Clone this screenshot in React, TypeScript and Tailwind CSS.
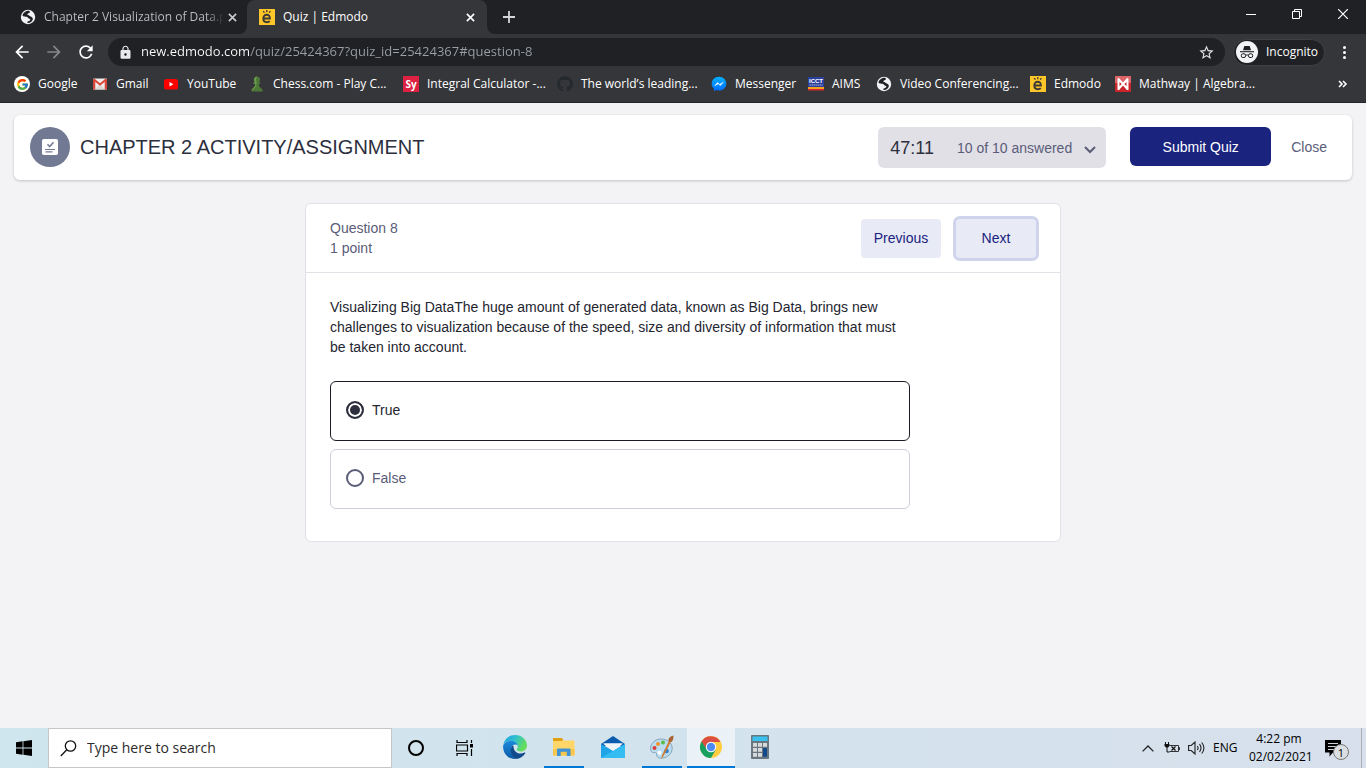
import React, { useState } from "react";
import { FcGoogle } from "react-icons/fc";
import { FaGithub } from "react-icons/fa";
import { MdArrowBack, MdArrowForward, MdRefresh, MdLock, MdStarBorder } from "react-icons/md";

const GlobeIcon = () => (
  <svg viewBox="0 0 16 16" className="size-4 shrink-0" aria-hidden="true">
    <circle cx="8" cy="8" r="7.2" fill="#f1f3f4" />
    <path d="M7.2 1.8C5 2.6 3 4 2.4 6.6c1.2 1.6 3 .9 4.300 1.200 1.500.4 1 1.800 2.600 1.900 1.300.1 1.200 1 .5 1.700-.9.9-2.300.7-2.800 2.200l1.100.4c2.200-.2 4-1.300 4.600-3.300.5-1.700-.5-3-2-3.300C9 7.100 9.600 6.200 8.300 6 7.300 5.900 7 5.400 7.700 4.700 8.600 3.900 9.900 4.200 10 2.700L9 1.800z" fill="#202124" />
    <path d="M2.600 8.600c.9 1.700 2.300 2.200 3.700 2.700.5.900-.2 1.800-.5 2.600C3.700 13 2.300 11.200 2 9z" fill="#f1f3f4" />
  </svg>
);

const EdmodoIcon = () => (
  <svg viewBox="0 0 16 16" className="size-4 shrink-0" aria-hidden="true">
    <rect width="16" height="16" fill="#ffc629" />
    <path d="M4.600 9.500h6.300c.1-2.200-1-3.800-3.200-3.800-2.100 0-3.400 1.600-3.400 3.900s1.400 3.700 3.600 3.700c1.300 0 2.200-.4 2.900-1.100" fill="none" stroke="#3c3a36" strokeWidth="1.900" />
    <path d="M4.300 2l1 1.800M7.800 1v2.300M11.300 2l-1 1.800" stroke="#3c3a36" strokeWidth="1.300" />
  </svg>
);

const GmailIcon = () => (
  <svg viewBox="0 0 16 16" className="size-4 shrink-0" aria-hidden="true">
    <rect x="1" y="2.500" width="14" height="11" rx="1" fill="#f1efee" />
    <path d="M1 3.500h2.300V13.500H2a1 1 0 0 1-1-1zM12.700 3.500H15v9a1 1 0 0 1-1 1h-1.300z" fill="#d5493d" />
    <path d="M3 13.500l4-4.500h2l4 4.500z" fill="#dcd9d7" />
    <path d="M1.600 3.200L8 8.600l6.400-5.400" fill="none" stroke="#db4437" strokeWidth="1.900" />
  </svg>
);

const YouTubeIcon = () => (
  <svg viewBox="0 0 16 16" className="size-4 shrink-0" aria-hidden="true">
    <rect x="1" y="3" width="14" height="10.500" rx="2.600" fill="#f00" />
    <path d="M6.500 6v4.500L10.300 8.250z" fill="#fff" />
  </svg>
);

const PawnIcon = () => (
  <svg viewBox="0 0 16 16" className="size-4 shrink-0" aria-hidden="true">
    <path d="M8 .5a3.100 3.100 0 0 1 2 5.400l1.400.9v1H9.700c.1 2.400.9 3.600 2.700 4.700.9.600 1.200 1.400 1.200 3H2.400c0-1.600.3-2.400 1.200-3 1.800-1.100 2.600-2.300 2.700-4.700H4.600v-1L6 5.900A3.100 3.100 0 0 1 8 .5z" fill="#4e7837" />
    <path d="M8 .5a3.100 3.100 0 0 0-2 5.400l-1.400.9v1h1.700c-.1 2.400-.9 3.600-2.700 4.700-.6.400-.9.900-1.100 1.600 3-.6 4.600-3 5-6.300C7.700 5 6.300 3.300 8 .5z" fill="#6a9a4b" />
  </svg>
);

const SyIcon = () => (
  <span className="flex size-4 shrink-0 items-center justify-center bg-[#dd2142] font-['Open_Sans',sans-serif] text-[10px] leading-none font-bold text-white">Sy</span>
);

const MessengerIcon = () => (
  <svg viewBox="0 0 16 16" className="size-4 shrink-0" aria-hidden="true">
    <defs>
      <linearGradient id="msg" x1="0" y1="0" x2="0" y2="1">
        <stop offset="0" stopColor="#00b2ff" />
        <stop offset="1" stopColor="#006aff" />
      </linearGradient>
    </defs>
    <path d="M8 .8C3.900.8.700 3.800.7 7.700c0 2.100.9 3.900 2.300 5.100v2.400l2.200-1.100c.9.300 1.800.4 2.800.4 4.100 0 7.300-2.900 7.300-6.800S12.100.8 8 .8z" fill="url(#msg)" />
    <path d="M3.700 9.800l2.800-3.200 2.200 1.800 3.500-2.100-2.800 3.300-2.200-1.800z" fill="#fff" stroke="#fff" strokeWidth=".5" />
  </svg>
);

const AimsIcon = () => (
  <svg viewBox="0 0 16 16" className="size-4 shrink-0" aria-hidden="true">
    <rect y="1" width="16" height="10.500" fill="#2b3f9d" />
    <text x="8" y="7" textAnchor="middle" fontFamily="Liberation Sans, sans-serif" fontWeight="bold" fontSize="6" fill="#fff">ICCT</text>
    <path d="M1.500 9h13" stroke="#aab4e0" strokeWidth="1.200" strokeDasharray="1.500 .5" />
    <path d="M0 11h16v2H0z" fill="#f2a21c" />
    <path d="M0 13h16v1.500H0z" fill="#d8242c" />
  </svg>
);

const MathwayIcon = () => (
  <svg viewBox="0 0 16 16" className="size-4 shrink-0" aria-hidden="true">
    <rect width="16" height="16" rx="1" fill="#c9252b" />
    <path d="M0 0h16v7H0z" fill="#dc6468" />
    <path d="M3.500 14V2.500M12.500 14V2.500M3 2.500L12.500 13M13 2.500L3.500 13" fill="none" stroke="#fff" strokeWidth="2" />
  </svg>
);

const IncognitoIcon = () => (
  <svg viewBox="0 0 22 22" className="size-[22px] shrink-0" aria-hidden="true">
    <circle cx="11" cy="11" r="11" fill="#f1f3f4" />
    <path d="M8.300 5h5.400l1.300 4.300H7z" fill="#202124" />
    <path d="M4 10.700h14" stroke="#202124" strokeWidth="1.100" />
    <rect x="5.300" y="12.800" width="4.200" height="3.700" rx="1.500" fill="none" stroke="#202124" />
    <rect x="12.500" y="12.800" width="4.200" height="3.700" rx="1.500" fill="none" stroke="#202124" />
    <path d="M9.500 14h3" stroke="#202124" />
  </svg>
);

const Cross = ({ className }: { className: string }) => (
  <svg viewBox="0 0 10 10" className={className} aria-hidden="true">
    <path d="M1 1l8 8M9 1l-8 8" stroke="currentColor" strokeWidth="1.800" />
  </svg>
);

const bookmarks = [
  { label: "Google", width: "w-[78px]", icon: <span className="flex size-4 shrink-0 items-center justify-center rounded-full bg-white"><FcGoogle size={13} /></span> },
  { label: "Gmail", width: "w-[71px]", icon: <GmailIcon /> },
  { label: "YouTube", width: "w-[86px]", icon: <YouTubeIcon /> },
  { label: "Chess.com - Play C...", width: "w-[154px]", icon: <PawnIcon /> },
  { label: "Integral Calculator -...", width: "w-[154px]", icon: <SyIcon /> },
  { label: "The world’s leading...", width: "w-[154px]", icon: <FaGithub className="size-4 shrink-0 text-[#24292e]" /> },
  { label: "Messenger", width: "w-[97px]", icon: <MessengerIcon /> },
  { label: "AIMS", width: "w-[68px]", icon: <AimsIcon /> },
  { label: "Video Conferencing...", width: "w-[154px]", icon: <GlobeIcon /> },
  { label: "Edmodo", width: "w-[85px]", icon: <EdmodoIcon /> },
  { label: "Mathway | Algebra...", width: "w-[154px]", icon: <MathwayIcon /> },
];

function Browser() {
  return (
    <header className="border-b border-[#232427] bg-[#35363a] font-['Open_Sans','Noto_Sans',sans-serif] text-xs text-white">
      <div className="flex h-[34px] bg-[#202124]">
        <div className="flex w-[247px] items-center bg-[#35363a]">
          <div className="flex h-full w-full items-center rounded-br-lg bg-[#202124] pr-2.5 pl-5">
            <GlobeIcon />
            <button className="ml-2 flex-1 overflow-hidden bg-gradient-to-r from-[#bdc1c6] from-90% to-transparent bg-clip-text text-left whitespace-nowrap text-transparent">Chapter 2 Visualization of Data.pdf</button>
            <button aria-label="Close tab" className="ml-1 text-[#c8cbcf]"><Cross className="size-[9px]" /></button>
          </div>
        </div>
        <div className="flex w-60 items-center rounded-t-lg bg-[#35363a] pr-3 pl-3">
          <EdmodoIcon />
          <button className="ml-2 flex-1 text-left">Quiz | Edmodo</button>
          <button aria-label="Close tab"><Cross className="size-[9px]" /></button>
        </div>
        <div className="flex flex-1 bg-[#35363a]">
          <div className="flex flex-1 items-center rounded-bl-lg bg-[#202124] pl-4">
            <button aria-label="New tab">
              <svg viewBox="0 0 12 12" className="size-3" aria-hidden="true"><path d="M6 0v12M0 6h12" stroke="#d3d5d8" strokeWidth="1.800" /></svg>
            </button>
            <div className="mb-1.5 ml-auto flex h-7 items-center">
              <button aria-label="Minimize" className="flex w-[46px] justify-center">
                <svg viewBox="0 0 10 10" className="size-2.5" aria-hidden="true"><path d="M0 5.500h10" stroke="#fff" /></svg>
              </button>
              <button aria-label="Restore" className="flex w-[46px] justify-center">
                <svg viewBox="0 0 10 10" className="size-2.5" aria-hidden="true"><path d="M.5 2.500h7v7h-7zM2.500 2.500v-2h7v7h-2" fill="none" stroke="#fff" /></svg>
              </button>
              <button aria-label="Close window" className="flex w-[46px] justify-center">
                <svg viewBox="0 0 10 10" className="size-2.5" aria-hidden="true"><path d="M0 0l10 10M10 0L0 10" stroke="#fff" strokeWidth="1.200" /></svg>
              </button>
            </div>
          </div>
        </div>
      </div>
      <div className="flex h-9 items-center pr-[15px] pl-3">
        <button aria-label="Back"><MdArrowBack size={20} /></button>
        <button aria-label="Forward" className="ml-3 text-[#85878b]"><MdArrowForward size={20} /></button>
        <button aria-label="Reload" className="ml-3"><MdRefresh size={20} /></button>
        <div className="ml-3 flex h-7 flex-1 items-center rounded-full bg-[#202124] pr-2.5 pl-2.5">
          <MdLock size={15} className="shrink-0 text-[#e8eaed]" />
          <input
            aria-label="Address"
            defaultValue="new.edmodo.com/quiz/25424367?quiz_id=25424367#question-8"
            className="ml-2 flex-1 bg-[linear-gradient(to_right,#ffffff_108px,#9aa0a6_108px)] bg-clip-text text-[13px] text-transparent outline-none"
          />
          <button aria-label="Bookmark this tab" className="text-[#dfe1e5]"><MdStarBorder size={17} /></button>
        </div>
        <button className="ml-2 flex h-[27px] w-[92px] items-center gap-2 rounded-full border border-[#3f4044] bg-[#202124] pl-0.5">
          <IncognitoIcon />
          Incognito
        </button>
        <button aria-label="Menu" className="ml-3 flex w-3.5 flex-col items-center gap-[2px]">
          <span className="size-[3px] rounded-full bg-white" />
          <span className="size-[3px] rounded-full bg-white" />
          <span className="size-[3px] rounded-full bg-white" />
        </button>
      </div>
      <nav aria-label="Bookmarks" className="flex h-8 items-center pb-1 pl-3.5">
        {bookmarks.map((b) => (
          <a key={b.label} href="#" className={`flex shrink-0 items-center gap-2 whitespace-nowrap ${b.width}`}>
            {b.icon}
            {b.label}
          </a>
        ))}
        <button aria-label="More bookmarks" className="mr-[18px] ml-auto">
          <svg viewBox="0 0 10 8" className="h-2 w-2.5" aria-hidden="true"><path d="M1 1l3 3-3 3M5 1l3 3-3 3" fill="none" stroke="#fff" strokeWidth="1.600" /></svg>
        </button>
      </nav>
    </header>
  );
}

function Quiz() {
  const [answer, setAnswer] = useState("True");
  return (
    <main className="flex-1 bg-[#f3f3f5] px-3.5 pt-3 font-['Liberation_Sans',Arial,sans-serif] text-sm text-[#5a5c78]">
      <div className="flex items-start rounded-md bg-white pt-3 pr-[25px] pb-3 pl-4 shadow-[0_1px_3px_rgba(0,0,0,0.2)]">
        <span className="flex size-10 items-center justify-center rounded-full bg-[#727993]">
          <svg viewBox="0 0 16 16" className="size-4" aria-hidden="true">
            <rect width="16" height="16" rx="1.800" fill="#fff" />
            <path d="M5.500 5.300l2.200 2.300L11.500 3.200" fill="none" stroke="#727993" strokeWidth="1.500" />
            <path d="M3 10.500h10M3.500 12.900h7" stroke="#727993" strokeWidth="1.100" />
          </svg>
        </span>
        <h1 className="ml-2.5 text-xl leading-10 text-[#2d2f3e]">CHAPTER 2 ACTIVITY/ASSIGNMENT</h1>
        <button className="ml-auto flex h-[41px] w-[228px] items-center rounded-md bg-[#e1e0e7] pr-2.5 pl-3">
          <span className="text-lg text-[#2d2f3e]">47:11</span>
          <span className="ml-auto">10 of 10 answered</span>
          <svg viewBox="0 0 12 8" className="mt-1 ml-3 h-2 w-3" aria-hidden="true"><path d="M1 1l5 5 5-5" fill="none" stroke="#5a5c78" strokeWidth="2" /></svg>
        </button>
        <button className="ml-6 h-[39px] w-[141px] rounded-md bg-[#1a237e] text-white">Submit Quiz</button>
        <button className="ml-5 h-[39px]">Close</button>
      </div>

      <section className="mx-auto mt-[23px] max-w-[756px] rounded-md border border-[#e1e1e7] bg-white">
        <div className="flex h-[69px] items-center border-b border-[#e1e1e7] pr-6 pl-6">
          <div className="leading-5">
            <h2>Question 8</h2>
            <p>1 point</p>
          </div>
          <button className="ml-auto h-[39px] w-20 rounded-sm bg-[#e8eaf6] text-[#1a237e]">Previous</button>
          <button className="ml-[15px] h-[39px] w-20 rounded-sm bg-[#e8eaf6] text-[#1a237e] shadow-[0_0_0_3px_#d0d3ec]">Next</button>
        </div>
        <div className="px-6 pt-6 pb-8">
          <p className="max-w-[580px] leading-5 text-[#24252f]">
            Visualizing Big DataThe huge amount of generated data, known as Big Data, brings new challenges to visualization because of the speed, size and diversity of information that must be taken into account.
          </p>
          <div className="mt-6 flex max-w-[580px] flex-col gap-2">
            {["True", "False"].map((option) => (
              <label
                key={option}
                className={
                  answer === option
                    ? "flex h-[60px] items-center gap-2 rounded-md border border-[#1b1b28] pb-0.5 pl-[15px] text-[#24252f]"
                    : "flex h-[60px] items-center gap-2 rounded-md border border-[#cfcedb] pb-0.5 pl-[15px]"
                }
              >
                <input
                  type="radio"
                  name="answer"
                  checked={answer === option}
                  onChange={() => setAnswer(option)}
                  className="size-[18px] appearance-none rounded-full border-2 border-[#5a5c78] checked:border-[#2d2f3e] checked:bg-[#2d2f3e] checked:shadow-[inset_0_0_0_2px_#ffffff]"
                />
                {option}
              </label>
            ))}
          </div>
        </div>
      </section>
    </main>
  );
}

const EdgeIcon = () => (
  <svg viewBox="0 0 24 24" className="size-6" aria-hidden="true">
    <defs>
      <linearGradient id="eg" x1="0" y1="0" x2="1" y2="0.400">
        <stop offset="0" stopColor="#1a9de0" />
        <stop offset=".5" stopColor="#2fc0d0" />
        <stop offset="1" stopColor="#66dd5a" />
      </linearGradient>
      <linearGradient id="eb" x1="0" y1="0" x2="0" y2="1">
        <stop offset="0" stopColor="#1b8ade" />
        <stop offset="1" stopColor="#0c59a4" />
      </linearGradient>
    </defs>
    <path d="M.3 10C1.400 4 6.200 0 12 0c7 0 12 5 12 10.500 0 3.600-2.800 6-6.200 6-3 0-4.600-1.200-4.200-2.200.4-.7 1.200-1.300 1.200-2.900C14.800 8 11.500 5.700 8 5.700 4.300 5.700 1.500 7.300.3 10z" fill="url(#eg)" />
    <path d="M.2 10.200C2 7 5 5.700 8 5.700c3.900 0 6.500 2.500 6.800 5-1-1-2.400-1.500-3.600-1C7 11.300 6.400 18 12.500 23.900 4.500 24.300-.6 17.500.2 10.200z" fill="url(#eb)" />
    <path d="M10.500 10C6 12.600 7.200 21 12.700 23.900c4.300-.2 7.600-2.500 9.600-5.700.3-.5-.1-.8-.6-.6-5.900 2.600-11.700-.2-11.200-7.600z" fill="#114a8b" />
  </svg>
);

const FolderIcon = () => (
  <svg viewBox="0 0 22 20" className="h-5 w-[22px]" aria-hidden="true">
    <path d="M0 1.500h9l1.500 2H21.500v15H0z" fill="#ffd667" />
    <path d="M0 1h9l1.200 1.700L9 4H0z" fill="#e0a010" />
    <path d="M0 12h21.500v6.500H0z" fill="#f7c64b" />
    <path d="M4 19v-6.500a1 1 0 0 1 1-1h11.500a1 1 0 0 1 1 1V19h-3.700v-4.300H7.700V19z" fill="#3d92d8" />
  </svg>
);

const MailIcon = () => (
  <svg viewBox="0 0 24 22" className="h-[22px] w-6" aria-hidden="true">
    <path d="M0 8L12 0l12 8v2H0z" fill="#0b5cae" />
    <path d="M2 7.500h20L12 16z" fill="#f7f9fb" />
    <path d="M0 8l12 6.700L24 8v14H0z" fill="#20a4e8" />
    <path d="M0 22L24 8v14z" fill="#35bdf2" />
    <path d="M3 7.500h18l-7 6-2 1.200-2-1.200z" fill="#f2f5f8" />
  </svg>
);

const PaintIcon = () => (
  <svg viewBox="0 0 24 24" className="size-6" aria-hidden="true">
    <path d="M11 4C5 4 .5 8.500.5 13.500c0 3 1.700 4.300 3.600 4.100 2-.2 2.800.6 2.600 2.300-.2 2 1.500 3.300 4.500 3.300 6 0 11-4.500 11-10S17 4 11 4z" fill="#b9dcef" stroke="#7798b0" strokeWidth=".8" />
    <circle cx="4.500" cy="13" r="2" fill="#d93f35" />
    <circle cx="8" cy="9" r="2" fill="#f2952c" />
    <circle cx="13" cy="7.500" r="2" fill="#5dbb46" />
    <circle cx="9.500" cy="17.800" r="2" fill="#fff" />
    <circle cx="16.500" cy="16" r="2.300" fill="#2f7fd0" />
    <path d="M11.300 23.500l.7-3L19.300 5l2 1L13 22z" fill="#d17a2e" />
    <path d="M18.700 6c-.8-2 .5-4.300 4.800-5.500C23.600 4 22.600 6.500 21 7.200z" fill="#a86431" />
  </svg>
);

const ChromeIcon = () => (
  <svg viewBox="0 0 24 24" className="size-6" aria-hidden="true">
    <circle cx="12" cy="12" r="11" fill="#ffcd40" />
    <path d="M12 12L2.470 6.500A11 11 0 0 0 12 23l4.760-8.250z" fill="#18a05e" />
    <path d="M2.470 6.500A11 11 0 0 1 21.530 7H12a5 5 0 0 0-4.800 6.500z" fill="#db4f43" />
    <circle cx="12" cy="12" r="5.200" fill="#fff" />
    <circle cx="12" cy="12" r="4.200" fill="#4c8bf5" />
  </svg>
);

const CalculatorIcon = () => (
  <svg viewBox="0 0 18 24" className="h-6 w-[18px]" aria-hidden="true">
    <rect width="18" height="24" rx=".8" fill="#69767f" />
    <path d="M1.500 1.500h15v4.500h-15z" fill="#39c1f0" />
    <path d="M2 8h4v3.800H2zM7 8h4v3.800H7zM12 8h4v3.800h-4zM2 13h4v3.800H2zM7 13h4v3.800H7zM2 18h4v3.800H2zM7 18h4v3.800H7z" fill="#d7dadb" />
    <path d="M12 13h4v8.800h-4z" fill="#134a8c" />
  </svg>
);

const apps = [
  { name: "Microsoft Edge", icon: <EdgeIcon />, box: "w-10 border-transparent" },
  { name: "File Explorer", icon: <FolderIcon />, box: "w-10 border-[#0078d7]" },
  { name: "Mail", icon: <MailIcon />, box: "w-10 border-transparent" },
  { name: "Paint", icon: <PaintIcon />, box: "w-10 border-[#0078d7]" },
  { name: "Google Chrome", icon: <ChromeIcon />, box: "w-12 border-[#0078d7] bg-[#eaf2f7]" },
  { name: "Calculator", icon: <CalculatorIcon />, box: "w-10 border-transparent" },
];

function Taskbar() {
  return (
    <footer className="flex h-10 items-center bg-gradient-to-r from-[#cfe6ee] to-[#d7e0ec] font-['Open_Sans','Noto_Sans',sans-serif] text-xs text-black">
      <button aria-label="Start" className="flex w-12 justify-center">
        <svg viewBox="0 0 16 16" className="size-4" aria-hidden="true"><path d="M0 2.200l6.600-.9v6.300H0zM7.400 1.200L16 0v7.600H7.400zM0 8.400h6.600v6.300L0 13.800zM7.400 8.400H16V16l-8.600-1.200z" /></svg>
      </button>
      <div className="flex h-10 w-[344px] items-center border border-[#c4c6c8] bg-white pl-[11px]">
        <svg viewBox="0 0 17 17" className="size-[17px]" aria-hidden="true"><circle cx="10.500" cy="6" r="5.200" fill="none" stroke="#111" strokeWidth="1.300" /><path d="M6.800 9.800L.8 16" stroke="#111" strokeWidth="1.300" /></svg>
        <input aria-label="Search" placeholder="Type here to search" className="ml-2.5 flex-1 text-sm outline-none placeholder:text-[#2b2b2b]" />
      </div>
      <button aria-label="Cortana" className="flex w-12 justify-center"><span className="size-4 rounded-full border-2 border-black" /></button>
      <button aria-label="Task view" className="flex w-12 justify-center">
        <svg viewBox="0 0 17 16" className="h-4 w-[17px]" aria-hidden="true"><path d="M1 0v2.500h10V0M1 16v-2.500h10V16M.5 5h11v6H.5zM15.500 0v3M15.500 9v7" fill="none" stroke="#000" strokeWidth="1.200" /><path d="M14 4h3v3.500h-3z" /></svg>
      </button>
      <div className="ml-0.5 flex">
        {apps.map((app) => (
          <div key={app.name} className="flex w-[49px] justify-center">
            <button aria-label={app.name} className={`flex h-10 items-center justify-center border-b-2 ${app.box}`}>{app.icon}</button>
          </div>
        ))}
      </div>
      <div className="ml-auto flex items-center">
        <button aria-label="Show hidden icons">
          <svg viewBox="0 0 12 7" className="h-[7px] w-3" aria-hidden="true"><path d="M.6 6.400L6 1l5.400 5.400" fill="none" stroke="#222" strokeWidth="1.300" /></svg>
        </button>
        <svg viewBox="0 0 16 12" className="ml-2.5 h-3 w-4" aria-label="Battery"><path d="M5.500 3.500h9v6h-9M14.500 5.500h1v2.500" fill="none" stroke="#333" /><path d="M1.500 0v2M4.500 0v2" stroke="#111" /><path d="M.5 2h5v2L4 5.500H2L.500 4z" fill="#111" /><path d="M3 5v5h2.500" fill="none" stroke="#111" /><path d="M7.500 4.500l4 4M11.500 4.500l-4 4" stroke="#111" strokeWidth="1.200" /></svg>
        <svg viewBox="0 0 17 14" className="ml-2 h-3.5 w-[17px]" aria-label="Volume"><path d="M.6 4.500h2.600L7 1v12L3.200 9.500H.6zM9.300 5q1.500 2 0 4M11.500 3.200q3 3.800 0 7.600M13.700 1.500q4.500 5.500 0 11" fill="none" stroke="#222" strokeWidth="1.100" /></svg>
        <span className="ml-2 w-6">ENG</span>
        <time className="ml-3 w-[60px] text-center leading-[18px] whitespace-nowrap">4:22 pm<br />02/02/2021</time>
        <button aria-label="Notifications" className="relative ml-4 size-6">
          <svg viewBox="0 0 17 17" className="size-[17px]" aria-hidden="true"><path d="M0 0h16v12.500H8L4.500 16.500v-4H0z" /><path d="M3 3.500h10M3 6.500h10M3 9.500h6" stroke="#e5e9ee" strokeWidth=".9" /></svg>
          <span className="absolute right-0 bottom-0 flex size-4 items-center justify-center rounded-full border border-[#777] bg-[#dcdfe2] text-[11px] leading-none">1</span>
        </button>
        <span className="ml-3 h-10 w-[5px] border-l border-[#a9b0b8]" />
      </div>
    </footer>
  );
}

export default function App() {
  return (
    <div className="flex min-h-screen flex-col">
      <Browser />
      <Quiz />
      <Taskbar />
    </div>
  );
}
